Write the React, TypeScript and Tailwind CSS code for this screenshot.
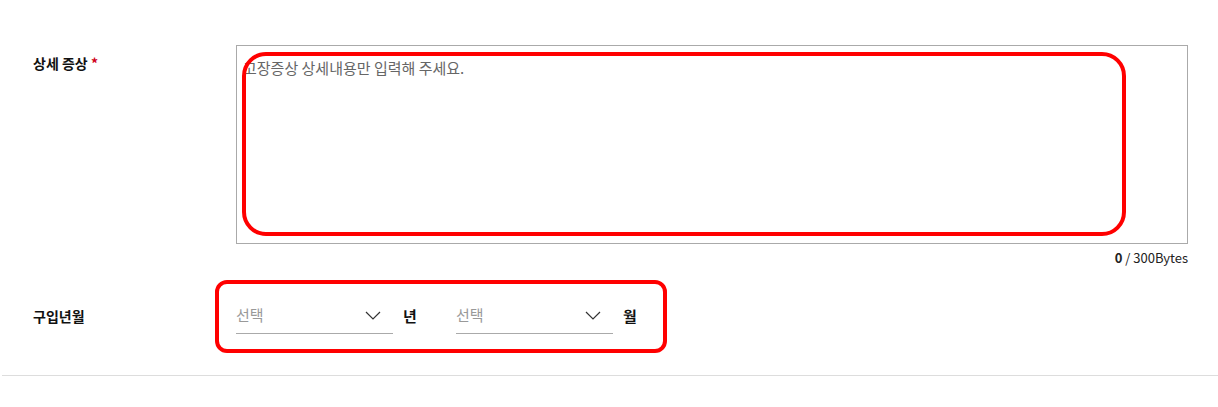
function Chevron() {
  return (
    <svg width="16" height="9" viewBox="0 0 16 9" fill="none" className="mr-[12px]">
      <polyline points="1,1 8,8 15,1" stroke="#333333" strokeWidth="1.2" />
    </svg>
  );
}

function Select({ unit }: { unit: string }) {
  return (
    <div className="flex items-center">
      <div className="flex h-[34px] w-[157px] items-center justify-between border-b border-[#aaaaaa] pb-[2px]">
        <span className="text-[15px] text-[#999999]">선택</span>
        <Chevron />
      </div>
      <span className="ml-[10px] w-[43px] text-[15px] font-bold text-[#111111]">{unit}</span>
    </div>
  );
}

export default function App() {
  return (
    <div
      className="relative h-[407px] w-[1218px] bg-white text-[#111111]"
      style={{ fontFamily: '"Noto Sans CJK KR", "Noto Sans", sans-serif' }}
    >
      <div className="pt-[45px]">
        <div className="flex">
          <div className="w-[236px] pl-[33px] pt-[8px] text-[14px] font-bold">
            상세 증상 <span className="text-[#d0021b]">*</span>
          </div>
          <div className="w-[952px]">
            <div className="h-[199px] border border-[#aaaaaa] px-[6px] pt-[11px] text-[15px] leading-[22px] text-[#666666]">
              고장증상 상세내용만 입력해 주세요.
            </div>
            <div className="mt-[4px] text-right text-[13px] text-[#222222]">
              <span className="font-bold">0</span> / 300Bytes
            </div>
          </div>
        </div>

        <div className="mt-[32px] flex items-center">
          <div className="w-[236px] pl-[33px] text-[14px] font-bold">구입년월</div>
          <div className="flex items-center gap-[10px]">
            <Select unit="년" />
            <Select unit="월" />
          </div>
        </div>

        <div className="ml-[2px] mt-[41px] border-b border-[#dddddd]" />
      </div>

      <div className="pointer-events-none absolute left-[242px] top-[52px] h-[184px] w-[884px] rounded-[24px] border-[4px] border-[#ff0000]" />
      <div className="pointer-events-none absolute left-[215px] top-[280px] h-[73px] w-[452px] rounded-[12px] border-[4px] border-[#ff0000]" />
    </div>
  );
}
